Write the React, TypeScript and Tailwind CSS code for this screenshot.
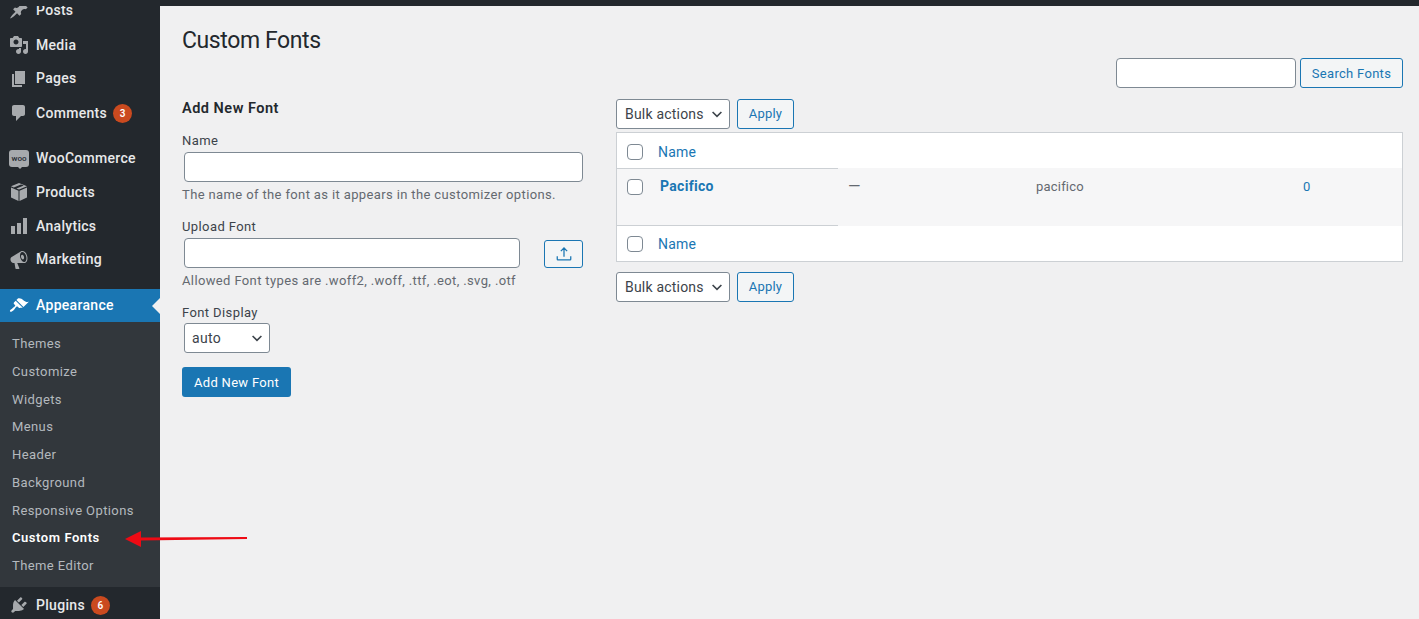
import React from "react";

const I = ({ d, c = "w-5 h-5" }: { d: string; c?: string }) => (
  <svg viewBox="0 0 20 20" className={c} fill="currentColor"><path d={d} /></svg>
);

const icons: Record<string, React.ReactNode> = {
  pin: <I d="M10.44 3.02l1.82-1.82 6.36 6.35-1.83 1.82c-1.05-.68-2.48-.57-3.41.36l-.75.75c-.92.93-1.04 2.35-.35 3.41l-1.83 1.82-2.41-2.41-2.8 2.79c-.42.42-3.38 2.71-3.8 2.29s1.86-3.39 2.28-3.81l2.79-2.79L4.1 9.36l1.83-1.82c1.05.69 2.48.57 3.4-.36l.75-.75c.93-.92 1.05-2.35.36-3.41z" />,
  media: <I d="M13 11V4c0-.55-.45-1-1-1h-1.67L9 1H5L3.67 3H2c-.55 0-1 .45-1 1v7c0 .55.45 1 1 1h10c.55 0 1-.45 1-1zM7 4.5c1.38 0 2.5 1.12 2.5 2.5S8.38 9.5 7 9.5 4.5 8.38 4.5 7 5.62 4.5 7 4.5zM14 6h5v10.5c0 1.38-1.12 2.5-2.5 2.5S14 17.88 14 16.5s1.12-2.5 2.5-2.5c.17 0 .34.02.5.05V9h-3V6zm-4 8.05V13h2v3.5c0 1.38-1.12 2.5-2.5 2.5S7 17.88 7 16.5 8.12 14 9.5 14c.17 0 .34.02.5.05z" />,
  page: <I d="M6 15V2h10v13H6zm-1 1h8v2H3V5h2v11z" />,
  comment: <I d="M5 2h9c1.1 0 2 .9 2 2v7c0 1.1-.9 2-2 2h-2l-5 5v-5H5c-1.1 0-2-.9-2-2V4c0-1.1.9-2 2-2z" />,
  woo: (
    <div className="relative w-5 h-[17px] rounded-[3px] bg-[#a7aaad] text-[#23282d] text-[8px] leading-[17px] text-center font-medium">
      woo
      <div className="absolute left-[9px] top-[17px] w-0 h-0 border-x-[2px] border-x-transparent border-t-[2px] border-t-[#a7aaad]" />
    </div>
  ),
  box: <I d="M10 1l8 3.2-8 3.3-2.6-1.1 7.4-2.9L12 2.6 4.8 5.4 2 4.2 10 1zM2 5.6l7.5 3.1V19L2 15.6V5.6zm16 0v10L10.5 19V8.7L18 5.6z" />,
  chart: <I d="M18 18V2h-4v16h4zm-6 0V7H8v11h4zm-6 0v-8H2v8h4z" />,
  mega: <I d="M18.15 5.94c.46 1.62.38 3.22-.02 4.48-.42 1.28-1.26 2.18-2.3 2.48-.16.06-.26.06-.4.06-.06.02-.12.02-.18.02-.06.02-.14.02-.22.02h-6.8l2.22 5.5c.02.14-.06.26-.14.34-.08.1-.24.16-.34.16H6.95c-.1 0-.26-.06-.34-.16-.08-.08-.16-.2-.14-.34l-1-5.5H4.25l-.02-.02c-.5.06-1.08-.18-1.54-.62s-.88-1.08-1.06-1.88c-.24-.8-.2-1.56-.02-2.2.18-.62.58-1.08 1.06-1.3l.02-.02 9-5.4c.1-.06.18-.1.24-.16.06-.04.14-.08.24-.12.16-.08.28-.12.5-.18 1.04-.3 2.24.1 3.22.98s1.76 2.18 2.22 3.82zm-2.58 5.98h-.02c.4-.1.74-.34 1.04-.7.58-.7.86-1.76.86-3.04 0-.64-.1-1.3-.28-1.98-.34-1.36-1.02-2.5-1.78-3.24s-1.68-1.1-2.46-.88c-.82.22-1.4.96-1.7 2-.32 1.04-.28 2.36.06 3.72.38 1.36 1 2.5 1.8 3.24.78.74 1.62 1.1 2.48.88zm-2.54-7.08c.22-.04.42-.02.62.04.38.16.76.48 1.02 1s.42 1.2.42 1.78c0 .3-.04.56-.12.8-.18.48-.44.84-.86.94-.34.1-.8-.06-1.14-.4-.34-.32-.66-.84-.82-1.44-.36-1.24-.08-2.44.88-2.72z" />,
  brush: <I d="M14.48 11.06L7.41 3.99l1.5-1.5c.5-.56 2.3-.47 3.51.32 1.21.8 1.43 1.28 2.91 2.1 1.18.64 2.45 1.26 4.45.85zm-.71.71L6.7 4.7 4.93 6.47c-.39.39-.39 1.02 0 1.41l1.06 1.06c.39.39.39 1.03 0 1.42-.6.6-1.43 1.11-2.21 1.69-.35.26-.7.53-1.01.84C1.43 13.23.4 14.84 1.12 15.56c.71.71 2.34-.31 3.69-1.65.31-.31.58-.66.85-1.02.57-.78 1.08-1.6 1.69-2.21.39-.39 1.02-.39 1.41 0l1.06 1.06c.39.39 1.02.39 1.41 0z" />,
  plug: <I d="M13.11 4.36L9.87 7.6 8 5.73l3.24-3.24c.35-.34 1.05-.2 1.56.32.52.51.66 1.21.31 1.55zm-8 1.77l.91-1.12 9.01 9.01-1.19.84c-.71.71-2.63 1.16-3.82 1.16H6.14L4.9 17.26c-.59.59-1.54.59-2.12 0-.59-.58-.59-1.53 0-2.12l1.24-1.24v-3.88c0-1.13.4-3.19 1.09-3.89zm7.26 3.97l3.24-3.24c.34-.35 1.04-.21 1.55.31.52.51.66 1.21.31 1.55l-3.24 3.25z" />,
};

function Item({ icon, label, badge, h }: { icon: string; label: string; badge?: string; h: string }) {
  return (
    <div className={`flex items-center shrink-0 ${h}`}>
      <div className="w-9 flex justify-center pl-[2px] text-[#a7aaad]">{icons[icon]}</div>
      <span className="text-[14px] text-[#e8e9ea] font-medium tracking-[0.3px]">{label}</span>
      {badge && (
        <span className="ml-[6px] w-[19px] h-[19px] rounded-full bg-[#ca4a1f] text-white text-[10px] font-semibold flex items-center justify-center">{badge}</span>
      )}
    </div>
  );
}

const Chevron = () => (
  <svg viewBox="0 0 20 20" className="w-4 h-4 absolute right-[5px] top-1/2 -translate-y-1/2 pointer-events-none text-[#3c434a]" fill="none" stroke="currentColor" strokeWidth="2">
    <path d="M4.5 7.5 10 13l5.5-5.5" />
  </svg>
);

function Bulk() {
  return (
    <div className="flex gap-[7px]">
      <div className="relative w-[114px] h-[30px]">
        <select className="appearance-none w-full h-full bg-white border border-[#7e8993] rounded-[3px] pl-2 text-[14px] text-[#3c434a] tracking-[0.2px]">
          <option>Bulk actions</option>
        </select>
        <Chevron />
      </div>
      <button className="w-[57px] h-[30px] border border-[#1a76b3] rounded-[3px] bg-[#f3f5f6] text-[#1a76b3] text-[13px] tracking-[0.2px]">Apply</button>
    </div>
  );
}

const Check = () => (
  <input type="checkbox" className="appearance-none block w-4 h-4 bg-white border border-[#7e8993] rounded-[4px]" />
);

function Row({ label, c }: { label: string; c: string }) {
  return (
    <div className={`flex items-center h-[35px] pl-[10px] bg-white ${c}`}>
      <Check />
      <a className="ml-[15px] mt-[1px] text-[14px] text-[#1a76b3] tracking-[0.2px]">{label}</a>
    </div>
  );
}

const Help = ({ children }: { children: React.ReactNode }) => (
  <p className="text-[13px] leading-[18px] text-[#646970] tracking-[0.37px] whitespace-nowrap">{children}</p>
);
const Label = ({ children, c }: { children: React.ReactNode; c: string }) => (
  <label className={`block text-[13px] leading-[18px] text-[#3c434a] tracking-[0.4px] ${c}`}>{children}</label>
);
const fieldCls = "block h-[30px] bg-white border border-[#7e8993] rounded-[4px]";

export default function App() {
  return (
    <div className="h-[619px] overflow-hidden flex flex-col bg-[#f0f0f1] relative" style={{ fontFamily: '"Roboto", "Liberation Sans", sans-serif' }}>
      <div className="flex flex-1 min-h-0">
        <aside className="w-[160px] shrink-0 bg-[#23282d] flex flex-col">
          <Item icon="pin" label="Posts" h="h-[20px] mb-[8px]" />
          <Item icon="media" label="Media" h="h-[34px]" />
          <Item icon="page" label="Pages" h="h-[33px]" />
          <Item icon="comment" label="Comments" badge="3" h="h-[36px] mb-[10px]" />
          <Item icon="woo" label="WooCommerce" h="h-[34px]" />
          <Item icon="box" label="Products" h="h-[34px]" />
          <Item icon="chart" label="Analytics" h="h-[34px]" />
          <Item icon="mega" label="Marketing" h="h-[33px] mb-[13px]" />
          <div className="relative shrink-0 flex items-center h-[33px] bg-[#1a76b3]">
            <div className="w-9 flex justify-center pl-[2px] text-white">{icons.brush}</div>
            <span className="text-[14px] text-white font-medium tracking-[0.3px]">Appearance</span>
            <div className="absolute right-0 top-1/2 -translate-y-1/2 w-0 h-0 border-y-[8px] border-y-transparent border-r-[8px] border-r-[#f0f0f1]" />
          </div>
          <div className="bg-[#32373c] shrink-0 pt-[8px] pl-3 h-[265px]">
            {["Themes", "Customize", "Widgets", "Menus", "Header", "Background", "Responsive Options", "Custom Fonts", "Theme Editor"].map((t) => (
              <div key={t} className={`h-[27.75px] leading-[27.75px] text-[13px] ${t === "Custom Fonts" ? "text-white font-semibold tracking-[0.55px]" : "text-[#b4b9be] tracking-[0.4px]"}`}>{t}</div>
            ))}
          </div>
          <Item icon="plug" label="Plugins" badge="6" h="h-[36px]" />
        </aside>

        <main className="flex-1 min-w-0 pl-[22px] pr-[16px] pt-[6px]">
          <div className="flex justify-between items-start h-[82px]">
            <h1 className="mt-[20px] text-[23px] leading-[29px] text-[#23282d] tracking-[-0.4px]">Custom Fonts</h1>
            <div className="mt-[52px] flex gap-[4px]">
              <input className={`${fieldCls} w-[180px]`} />
              <button className="w-[103px] h-[30px] border border-[#1a76b3] rounded-[3px] bg-[#f3f5f6] text-[#1a76b3] text-[13px] tracking-[0.3px] pt-[1px]">Search Fonts</button>
            </div>
          </div>

          <div className="flex">
            <section className="w-[402px] mr-[32px] shrink-0">
              <h2 className="mt-[11px] text-[14.5px] leading-[20px] font-semibold text-[#23282d] tracking-[0.5px]">Add New Font</h2>
              <Label c="mt-[13px] mb-[2px]">Name</Label>
              <input className={`${fieldCls} ml-[2px] w-[399px]`} />
              <div className="mt-[4px]"><Help>The name of the font as it appears in the customizer options.</Help></div>
              <Label c="mt-[14px] mb-[2px]">Upload Font</Label>
              <div className="flex items-center pl-[2px]">
                <input className={`${fieldCls} w-[336px]`} />
                <button className="ml-[24px] mt-[2px] w-[39px] h-[28px] border border-[#1a76b3] rounded-[3px] bg-[#f3f5f6] flex items-center justify-center text-[#1a76b3]">
                  <svg viewBox="0 0 20 20" className="w-[18px] h-[18px]" fill="none" stroke="currentColor" strokeWidth="1.4"><path d="M10 13V3.5M6.5 6.8 10 3.3l3.5 3.5M2.5 12.5v3.3c0 .5.3.8.8.8h13.4c.5 0 .8-.3.8-.8v-3.3" /></svg>
                </button>
              </div>
              <div className="mt-[4px]"><Help>Allowed Font types are .woff2, .woff, .ttf, .eot, .svg, .otf</Help></div>
              <Label c="mt-[14px] mb-[1px]">Font Display</Label>
              <div className="relative ml-[2px] w-[86px] h-[30px]">
                <select className="appearance-none w-full h-full bg-white border border-[#7e8993] rounded-[3px] pl-[7px] pt-[1px] text-[14px] text-[#3c434a] tracking-[0.3px]">
                  <option>auto</option>
                </select>
                <Chevron />
              </div>
              <button className="mt-[14px] w-[109px] h-[30px] rounded-[3px] bg-[#1a76b3] text-white text-[13px] tracking-[0.3px] pt-[1px]">Add New Font</button>
            </section>

            <section className="flex-1 min-w-0 pt-[11px]">
              <Bulk />
              <div className="mt-[3px] mb-[10px] border border-[#ccd0d4] bg-white">
                <Row label="Name" c="pt-[2px]" />
                <div className="grid grid-cols-[221px_198px_267px_1fr] bg-[#f6f6f7] h-[58px] text-[13px] text-[#646970]">
                  <div className="border-y border-[#ccd0d4] flex items-start pl-[10px] pt-[10px]">
                    <Check />
                    <a className="ml-[17px] -mt-[1px] text-[14px] leading-[16px] font-bold text-[#1a76b3] tracking-[0.3px]">Pacifico</a>
                  </div>
                  <div className="pl-[10px] pt-[11px] leading-[16px] text-[16px]">—</div>
                  <div className="pt-[11px] leading-[16px] tracking-[0.2px]">pacifico</div>
                  <div className="pt-[11px] leading-[16px] text-[#1a76b3]">0</div>
                </div>
                <Row label="Name" c="" />
              </div>
              <Bulk />
            </section>
          </div>
        </main>
      </div>

      <div className="absolute top-0 left-0 right-0 h-[6px] bg-[#23282d]" />
      <svg className="absolute left-[120px] top-[528px] w-[130px] h-[22px]" viewBox="0 0 130 22" fill="#ee0a14">
        <path d="M5 11 21 3v6.6L127 9v2L21 12.4V19z" />
      </svg>
    </div>
  );
}
